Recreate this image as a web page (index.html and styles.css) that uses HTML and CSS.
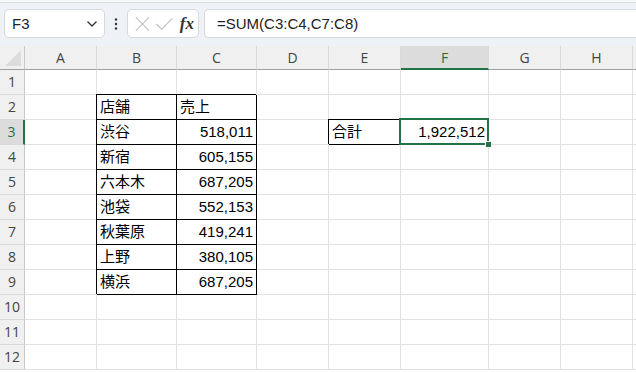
FILE: index.html
```html
<!DOCTYPE html>
<html lang="ja">
<head>
  <meta charset="UTF-8">
  <title>Book1 - Excel</title>
  <link rel="stylesheet" href="styles.css">
</head>
<body>
  <div class="formula-bar">
    <div class="name-box">
      <span>F3</span>
      <svg class="chev" width="12" height="8" viewBox="0 0 12 8"><path d="M1.5 1.5 L6 6 L10.5 1.5" fill="none" stroke="#333" stroke-width="1.3"/></svg>
    </div>
    <div class="dots">
      <svg width="4" height="12" viewBox="0 0 4 12"><circle cx="2" cy="1.5" r="1.2" fill="#333"/><circle cx="2" cy="6" r="1.2" fill="#333"/><circle cx="2" cy="10.5" r="1.2" fill="#333"/></svg>
    </div>
    <div class="fx-box">
      <svg width="18" height="18" viewBox="0 0 18 18"><path d="M2 2 L16 16 M16 2 L2 16" stroke="#c4c4c4" stroke-width="1.3" fill="none"/></svg>
      <svg width="20" height="18" viewBox="0 0 20 18"><path d="M1.5 9 L7 14.5 L18.5 3" stroke="#c4c4c4" stroke-width="1.3" fill="none"/></svg>
      <span class="fx">fx</span>
    </div>
    <div class="formula">=SUM(C3:C4,C7:C8)</div>
  </div>

  <div class="sheet">
    <div class="corner"></div>
    <div class="col-head">A</div>
    <div class="col-head">B</div>
    <div class="col-head">C</div>
    <div class="col-head">D</div>
    <div class="col-head">E</div>
    <div class="col-head sel">F</div>
    <div class="col-head">G</div>
    <div class="col-head">H</div>
    <div class="col-head"></div>

    <div class="row-head">1</div>
    <div class="cell"></div><div class="cell"></div><div class="cell"></div><div class="cell"></div><div class="cell"></div><div class="cell"></div><div class="cell"></div><div class="cell"></div><div class="cell"></div>

    <div class="row-head">2</div>
    <div class="cell"></div><div class="cell bd">店舗</div><div class="cell bd">売上</div><div class="cell"></div><div class="cell"></div><div class="cell"></div><div class="cell"></div><div class="cell"></div><div class="cell"></div>

    <div class="row-head sel">3</div>
    <div class="cell"></div><div class="cell bd">渋谷</div><div class="cell bd num">518,011</div><div class="cell"></div><div class="cell bd">合計</div><div class="cell num active">1,922,512</div><div class="cell"></div><div class="cell"></div><div class="cell"></div>

    <div class="row-head">4</div>
    <div class="cell"></div><div class="cell bd">新宿</div><div class="cell bd num">605,155</div><div class="cell"></div><div class="cell"></div><div class="cell"></div><div class="cell"></div><div class="cell"></div><div class="cell"></div>

    <div class="row-head">5</div>
    <div class="cell"></div><div class="cell bd">六本木</div><div class="cell bd num">687,205</div><div class="cell"></div><div class="cell"></div><div class="cell"></div><div class="cell"></div><div class="cell"></div><div class="cell"></div>

    <div class="row-head">6</div>
    <div class="cell"></div><div class="cell bd">池袋</div><div class="cell bd num">552,153</div><div class="cell"></div><div class="cell"></div><div class="cell"></div><div class="cell"></div><div class="cell"></div><div class="cell"></div>

    <div class="row-head">7</div>
    <div class="cell"></div><div class="cell bd">秋葉原</div><div class="cell bd num">419,241</div><div class="cell"></div><div class="cell"></div><div class="cell"></div><div class="cell"></div><div class="cell"></div><div class="cell"></div>

    <div class="row-head">8</div>
    <div class="cell"></div><div class="cell bd">上野</div><div class="cell bd num">380,105</div><div class="cell"></div><div class="cell"></div><div class="cell"></div><div class="cell"></div><div class="cell"></div><div class="cell"></div>

    <div class="row-head">9</div>
    <div class="cell"></div><div class="cell bd">横浜</div><div class="cell bd num">687,205</div><div class="cell"></div><div class="cell"></div><div class="cell"></div><div class="cell"></div><div class="cell"></div><div class="cell"></div>

    <div class="row-head">10</div>
    <div class="cell"></div><div class="cell"></div><div class="cell"></div><div class="cell"></div><div class="cell"></div><div class="cell"></div><div class="cell"></div><div class="cell"></div><div class="cell"></div>

    <div class="row-head">11</div>
    <div class="cell"></div><div class="cell"></div><div class="cell"></div><div class="cell"></div><div class="cell"></div><div class="cell"></div><div class="cell"></div><div class="cell"></div><div class="cell"></div>

    <div class="row-head">12</div>
    <div class="cell"></div><div class="cell"></div><div class="cell"></div><div class="cell"></div><div class="cell"></div><div class="cell"></div><div class="cell"></div><div class="cell"></div><div class="cell"></div>
  </div>
</body>
</html>
```

FILE: styles.css
```css
body {
  margin: 0;
  width: 636px;
  height: 372px;
  overflow: hidden;
  background: #fff;
  font-family: "Liberation Sans", "Noto Sans CJK JP", sans-serif;
}

/* formula bar */
.formula-bar {
  display: flex;
  align-items: center;
  height: 46px;
  box-sizing: border-box;
  padding: 7px 0 6px 4px;
  background: #eef1f5;
  box-shadow: inset 0 2px 0 #f7f8fa, inset 0 3px 0 #d8dce1;
}

.name-box {
  display: flex;
  align-items: center;
  justify-content: space-between;
  width: 101px;
  height: 29px;
  box-sizing: border-box;
  padding: 0 6px 0 7px;
  background: #fff;
  border: 1px solid #d6d9dd;
  border-radius: 5px;
  font-size: 15px;
  color: #222;
}

.chev {
  margin-top: 1px;
}

.dots {
  width: 22px;
  display: flex;
  justify-content: center;
}

.fx-box {
  display: flex;
  align-items: center;
  gap: 4px;
  width: 72px;
  height: 29px;
  box-sizing: border-box;
  padding: 0 4px 0 6px;
  background: #fff;
  border: 1px solid #d6d9dd;
  border-radius: 5px;
}

.fx {
  font-family: "Liberation Serif", "DejaVu Serif", serif;
  font-style: italic;
  font-weight: bold;
  font-size: 17px;
  color: #333;
  margin-left: 2px;
}

.formula {
  flex: 1;
  margin-left: 5px;
  height: 29px;
  line-height: 27px;
  box-sizing: border-box;
  padding-left: 12px;
  background: #fff;
  border: 1px solid #d6d9dd;
  border-right: none;
  border-radius: 5px 0 0 5px;
  font-size: 15px;
  color: #222;
}

/* sheet grid */
.sheet {
  display: grid;
  grid-template-columns: 25px 72px 80px 80px 72px 72px 88px 72px 72px 1fr;
  grid-template-rows: 24px repeat(12, 25px);
}

.corner {
  background: #f0f0f0;
  border-right: 1px solid #c8c8c8;
  border-bottom: 1px solid #9f9f9f;
  position: relative;
  overflow: hidden;
}

.corner::after {
  content: "";
  position: absolute;
  right: 3px;
  bottom: 3px;
  border-left: 16px solid transparent;
  border-bottom: 16px solid #dcdcdc;
}

.col-head {
  background: #f0f0f0;
  border-right: 1px solid #dadada;
  border-bottom: 1px solid #9f9f9f;
  font-family: "Open Sans", "Liberation Sans", sans-serif;
  font-size: 14px;
  color: #444;
  text-align: center;
  line-height: 23px;
}

.col-head.sel {
  background: #dcdcdc;
  color: #217346;
  border-bottom: 2px solid #217346;
}

.row-head {
  background: #f0f0f0;
  border-right: 1px solid #c8c8c8;
  border-bottom: 1px solid #dadada;
  font-family: "Open Sans", "Liberation Sans", sans-serif;
  font-size: 14px;
  color: #444;
  text-align: center;
  line-height: 24px;
}

.row-head.sel {
  background: #dcdcdc;
  color: #217346;
  border-right: 2px solid #217346;
}

.cell {
  border-right: 1px solid #e1e1e1;
  border-bottom: 1px solid #e1e1e1;
  font-size: 15px;
  line-height: 24px;
  padding: 0 3px;
  color: #000;
  white-space: nowrap;
}

.cell.num {
  text-align: right;
}

.cell.bd {
  border-color: #000;
  box-shadow: -1px -1px 0 #000;
}

.cell.active {
  position: relative;
}

.cell.active::before {
  content: "";
  position: absolute;
  left: -2px;
  top: -2px;
  right: -1px;
  bottom: -1px;
  border: 2px solid #217346;
}

.cell.active::after {
  content: "";
  position: absolute;
  right: -4px;
  bottom: -4px;
  width: 5px;
  height: 5px;
  background: #217346;
  border: 1px solid #fff;
}
```
